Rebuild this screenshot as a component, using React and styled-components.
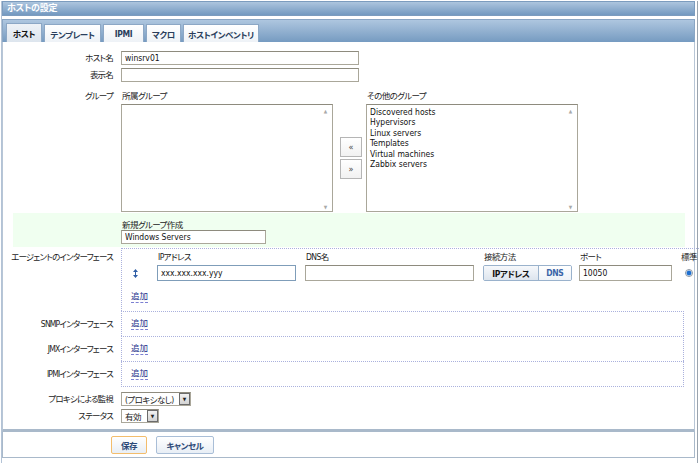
import React from 'react'
import styled, { createGlobalStyle } from 'styled-components'

const GlobalStyle = createGlobalStyle`
  html, body {
    margin: 0;
    padding: 0;
    background: #fff;
  }
  body {
    width: 700px;
    height: 463px;
    overflow: hidden;
    font-family: "DejaVu Sans Condensed", "DejaVu Sans", "Noto Sans CJK JP", sans-serif;
    font-size: 8.5px;
    color: #1c1c1c;
    font-feature-settings: "palt";
  }
  * { box-sizing: border-box; }
`

const Window = styled.div`
  margin: 1px 2px 0 1px;
  width: 697px;
  height: 462px;
  border-left: 1px solid #b3c3d6;
  border-right: 1px solid #9aa4ae;
  padding-right: 2px;
`
const TitleBar = styled.div`
  height: 15px;
  margin-top: 1px;
  padding-left: 4px;
  line-height: 13px;
  color: #fff;
  font-weight: bold;
  font-size: 9px;
  letter-spacing: -0.3px;
  background: linear-gradient(#adc5de, #7399c0);
  border: 1px solid #7c9cbe;
`
const TabBar = styled.div`
  height: 23px;
  margin-top: 3px;
  display: flex;
  align-items: flex-end;
  gap: 2px;
  padding-left: 3px;
  background: linear-gradient(#aec6df, #769bc1);
  border: 1px solid #8aa6c4;
  border-bottom: none;
`
const Tab = styled.div`
  width: ${p => p.w}px;
  height: ${p => (p.active ? 19 : 18)}px;
  display: flex;
  align-items: center;
  justify-content: center;
  font-weight: bold;
  letter-spacing: -0.4px;
  color: ${p => (p.active ? '#111' : '#2a3e5c')};
  border: 1px solid #8ca7c5;
  border-bottom: none;
  background: ${p => (p.active ? 'linear-gradient(#eef2f7, #dde5ee)' : 'linear-gradient(#ffffff, #eef2f7)')};
`
const Content = styled.div`
  height: 390px;
  padding-top: 9px;
  border-left: 1px solid #b8c6d6;
  border-right: 1px solid #b8c6d6;
  border-bottom: 3px solid #a9b9ca;
`
const Row = styled.div`
  display: grid;
  grid-template-columns: ${p => p.labelW || 110}px 1fr;
  column-gap: 8px;
  align-items: ${p => (p.top ? 'start' : 'center')};
  margin-top: ${p => p.mt || 0}px;
  margin-right: ${p => p.mr || 0}px;
`
const Label = styled.div`
  text-align: right;
  white-space: nowrap;
  line-height: 10px;
  letter-spacing: -0.8px;
  padding-top: ${p => p.pt || 0}px;
`
const TextInput = styled.input`
  display: block;
  width: ${p => p.w}px;
  height: ${p => p.h || 14}px;
  margin: 0;
  padding: 0 3px;
  font: inherit;
  color: #111;
  background: #fff;
  border: 1px solid ${p => (p.focus ? '#7f9db9' : '#aaa79a')};
  border-top-color: ${p => (p.focus ? '#7f9db9' : '#8e8b7e')};
  outline: none;
`
const GroupField = styled.div`
  display: flex;
  align-items: flex-start;
`
const ListColumn = styled.div`
  width: 212px;
  display: flex;
  flex-direction: column;
`
const SubLabel = styled.div`
  height: 10px;
  line-height: 10px;
  padding-left: 1px;
  margin-bottom: 3px;
  letter-spacing: -0.6px;
  color: #222;
`
const ListBox = styled.div`
  height: 108px;
  display: flex;
  border: 1px solid #aaa79a;
  border-top-color: #8e8b7e;
  background: #fff;
`
const ListItems = styled.div`
  flex: 1;
  padding: 2px 3px;
  line-height: 10.4px;
  color: #111;
`
const ScrollTrack = styled.div`
  width: 13px;
  display: flex;
  flex-direction: column;
  justify-content: space-between;
  align-items: center;
  padding: 3px 0 1px;
  color: #a9a9a9;
  font-size: 5px;
`
const MoveColumn = styled.div`
  display: flex;
  flex-direction: column;
  gap: 2px;
  margin: 46px 4px 0 7px;
`
const MoveButton = styled.div`
  width: 22px;
  height: 20px;
  display: flex;
  align-items: center;
  justify-content: center;
  border: 1px solid #b5b5b5;
  background: linear-gradient(#ffffff, #f1f1f1);
  font-size: 9px;
  color: #444;
`
const NewGroupBand = styled(Row)`
  margin-left: 10px;
  padding: 8px 0 3px;
  background: #f0fff0;
`
const StackedField = styled.div`
  display: flex;
  flex-direction: column;
`
const BandLabel = styled.div`
  height: 9px;
  line-height: 9px;
  padding-left: 1px;
  letter-spacing: -0.6px;
  color: #222;
`
const IfaceCell = styled.div`
  height: ${p => p.h}px;
  border: 1px dotted #aab1dd;
  border-bottom: ${p => (p.last ? '1px dotted #aab1dd' : 'none')};
  display: flex;
  flex-direction: column;
  justify-content: ${p => (p.center ? 'center' : 'flex-start')};
  padding-left: ${p => (p.center ? 9 : 0)}px;
  overflow: visible;
`
const IfaceGrid = styled.div`
  display: grid;
  grid-template-columns: 35px 148px 178px 96px 101px 20px;
  grid-template-rows: 10px 16px;
  row-gap: 3px;
  align-items: center;
  margin-top: 3px;
`
const ColHead = styled.div`
  line-height: 10px;
  padding-left: 1px;
  white-space: nowrap;
  letter-spacing: -0.6px;
  color: #222;
`
const MoveIcon = styled.svg`
  margin-left: 11px;
  display: block;
`
const Segmented = styled.div`
  width: 89px;
  height: 16px;
  display: flex;
  border: 1px solid #9ab2cc;
  border-radius: 2px;
  overflow: hidden;
`
const SegItem = styled.div`
  width: ${p => p.w}px;
  display: flex;
  align-items: center;
  justify-content: center;
  font-weight: bold;
  letter-spacing: -0.4px;
  color: ${p => (p.active ? '#111' : '#3b66a8')};
  background: ${p => (p.active ? 'linear-gradient(#f6f8fb, #dde5ee)' : 'linear-gradient(#ffffff, #eef3f8)')};
  border-left: ${p => (p.active ? 'none' : '1px solid #9ab2cc')};
`
const Radio = styled.div`
  width: 8px;
  height: 8px;
  margin-left: 5px;
  border-radius: 50%;
  border: 1px solid #8d97a3;
  background: radial-gradient(circle, #1e6fd0 0 2px, #9cc4ef 2.5px, #eef3f8 3px);
`
const AddLink = styled.span`
  align-self: flex-start;
  color: #23308a;
  line-height: 9px;
  padding-bottom: 1px;
  border-bottom: 1px dashed #7c80d2;
  margin-left: ${p => p.ml || 0}px;
  margin-top: ${p => p.mt || 0}px;
`
const Select = styled.div`
  width: ${p => p.w}px;
  height: 14px;
  display: flex;
  align-items: center;
  justify-content: space-between;
  white-space: nowrap;
  letter-spacing: -0.6px;
  border: 1px solid #aaa79a;
  border-top-color: #8e8b7e;
  background: #fff;
  padding-left: 3px;
`
const SelectArrow = styled.div`
  flex: none;
  width: 11px;
  height: 12px;
  display: flex;
  align-items: center;
  justify-content: center;
  border: 1px solid #6b6b6b;
  background: linear-gradient(#f2f2f2, #d3d3d3);
  font-size: 5px;
  letter-spacing: 0;
  color: #222;
`
const Footer = styled.div`
  height: 26px;
  display: flex;
  align-items: center;
  gap: 9px;
  padding-left: 108px;
  border: 1px solid #a9b9ca;
  border-top: none;
`
const Button = styled.div`
  width: ${p => p.w}px;
  height: 18px;
  display: flex;
  align-items: center;
  justify-content: center;
  font-weight: bold;
  letter-spacing: -0.4px;
  color: #2c4977;
  border: 1px solid ${p => (p.primary ? '#f3bd6c' : '#a9bed7')};
  border-radius: 2px;
  background: linear-gradient(#ffffff, #e8eef5);
`

const tabs = [
  { label: 'ホスト', w: 36, active: true },
  { label: 'テンプレート', w: 57 },
  { label: 'IPMI', w: 41 },
  { label: 'マクロ', w: 35 },
  { label: 'ホストインベントリ', w: 76 },
]

const otherGroups = [
  'Discovered hosts',
  'Hypervisors',
  'Linux servers',
  'Templates',
  'Virtual machines',
  'Zabbix servers',
]

const Scroll = () => (
  <ScrollTrack>
    <span>▲</span>
    <span>▼</span>
  </ScrollTrack>
)

export default function App() {
  return (
    <>
      <GlobalStyle />
      <Window>
        <TitleBar>ホストの設定</TitleBar>
        <TabBar>
          {tabs.map(t => (
            <Tab key={t.label} w={t.w} active={t.active}>{t.label}</Tab>
          ))}
        </TabBar>
        <Content>
          <Row>
            <Label>ホスト名</Label>
            <TextInput w={238} readOnly value="winsrv01" />
          </Row>
          <Row mt={3}>
            <Label>表示名</Label>
            <TextInput w={238} readOnly value="" />
          </Row>
          <Row mt={9} top>
            <Label>グループ</Label>
            <GroupField>
              <ListColumn>
                <SubLabel>所属グループ</SubLabel>
                <ListBox>
                  <ListItems />
                  <Scroll />
                </ListBox>
              </ListColumn>
              <MoveColumn>
                <MoveButton>«</MoveButton>
                <MoveButton>»</MoveButton>
              </MoveColumn>
              <ListColumn>
                <SubLabel>その他のグループ</SubLabel>
                <ListBox>
                  <ListItems>
                    {otherGroups.map(g => <div key={g}>{g}</div>)}
                  </ListItems>
                  <Scroll />
                </ListBox>
              </ListColumn>
            </GroupField>
          </Row>
          <NewGroupBand labelW={100} mt={1} mr={9}>
            <span />
            <StackedField>
              <BandLabel>新規グループ作成</BandLabel>
              <TextInput w={145} readOnly value="Windows Servers" />
            </StackedField>
          </NewGroupBand>

          <Row mt={1} mr={10} top>
            <Label pt={4}>エージェントのインターフェース</Label>
            <IfaceCell h={63}>
              <IfaceGrid>
                <span />
                <ColHead>IPアドレス</ColHead>
                <ColHead>DNS名</ColHead>
                <ColHead>接続方法</ColHead>
                <ColHead>ポート</ColHead>
                <ColHead>標準</ColHead>
                <MoveIcon width="5" height="9" viewBox="0 0 5 9">
                  <path d="M2.5 0 L5 3 L0 3 Z M2.5 9 L5 6 L0 6 Z" fill="#2f5ea6" />
                  <rect x="2" y="3" width="1" height="3" fill="#2f5ea6" />
                </MoveIcon>
                <TextInput w={139} h={16} focus readOnly value="xxx.xxx.xxx.yyy" />
                <TextInput w={169} h={16} readOnly value="" />
                <Segmented>
                  <SegItem w={55} active>IPアドレス</SegItem>
                  <SegItem w={34}>DNS</SegItem>
                </Segmented>
                <TextInput w={93} h={16} readOnly value="10050" />
                <Radio />
              </IfaceGrid>
              <AddLink ml={9} mt={11}>追加</AddLink>
            </IfaceCell>
          </Row>
          <Row mr={10}>
            <Label>SNMPインターフェース</Label>
            <IfaceCell h={25} center><AddLink>追加</AddLink></IfaceCell>
          </Row>
          <Row mr={10}>
            <Label>JMXインターフェース</Label>
            <IfaceCell h={25} center><AddLink>追加</AddLink></IfaceCell>
          </Row>
          <Row mr={10}>
            <Label>IPMIインターフェース</Label>
            <IfaceCell h={26} center last><AddLink>追加</AddLink></IfaceCell>
          </Row>

          <Row mt={5}>
            <Label>プロキシによる監視</Label>
            <Select w={70}>
              <span>(プロキシなし)</span>
              <SelectArrow>▼</SelectArrow>
            </Select>
          </Row>
          <Row mt={3}>
            <Label>ステータス</Label>
            <Select w={38}>
              <span>有効</span>
              <SelectArrow>▼</SelectArrow>
            </Select>
          </Row>
        </Content>
        <Footer>
          <Button w={36} primary>保存</Button>
          <Button w={58}>キャンセル</Button>
        </Footer>
      </Window>
    </>
  )
}
